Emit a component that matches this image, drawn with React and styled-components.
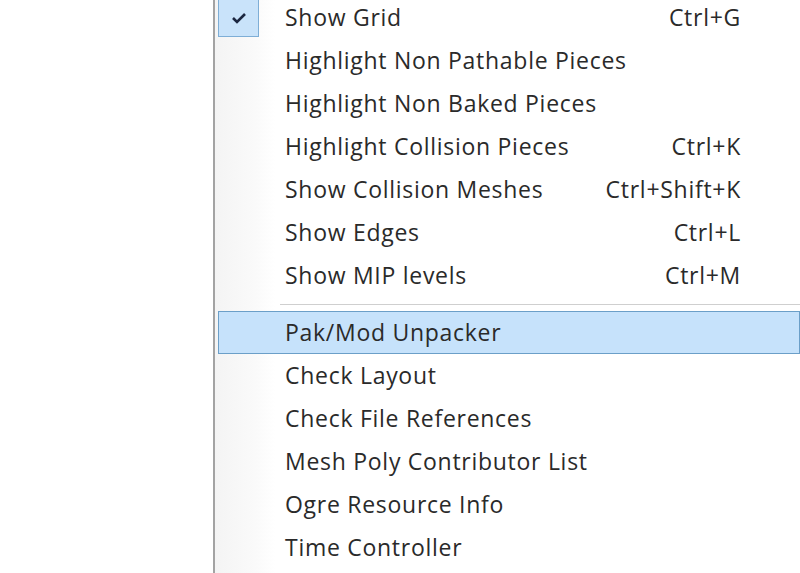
import React from 'react';
import styled, { createGlobalStyle } from 'styled-components';

const GlobalStyle = createGlobalStyle`
  html, body {
    margin: 0;
    padding: 0;
    background: #ffffff;
    overflow: hidden;
  }
`;

const Page = styled.div`
  width: 800px;
  height: 573px;
  display: flex;
  overflow: hidden;
  background: #ffffff;
`;

const Menu = styled.div`
  margin-left: 213px;
  margin-top: -4px;
  width: 600px;
  flex-shrink: 0;
  border-left: 2px solid #a3a3a3;
  background: linear-gradient(to right, #f4f4f4 0px, #fafafa 40px, #ffffff 60px);
  font-family: "Open Sans", "Noto Sans", sans-serif;
  font-size: 23px;
  letter-spacing: 0.72px;
  color: #2a2a2a;
`;

const Item = styled.div`
  height: 43px;
  box-sizing: border-box;
  margin-left: 3px;
  display: grid;
  grid-template-columns: 66px 1fr auto;
  align-items: center;
  padding-right: 58px;
  padding-bottom: 2px;
  background: ${p => (p.$active ? '#c6e2fb' : 'transparent')};
  border: 1px solid ${p => (p.$active ? '#6b9fc8' : 'transparent')};
  width: 582px;
`;

const Gutter = styled.div`
  height: 100%;
  margin-bottom: -2px;
  display: flex;
  align-items: flex-end;
`;

const CheckBox = styled.div`
  width: 41px;
  height: 38px;
  margin-left: -1px;
  box-sizing: border-box;
  background: #c9e3fa;
  border: 1px solid #7eaed6;
  display: flex;
  align-items: center;
  justify-content: center;
`;

const Label = styled.span`
  white-space: nowrap;
`;

const Shortcut = styled.span`
  white-space: nowrap;
  text-align: right;
`;

const Separator = styled.div`
  height: 14px;
  display: flex;
  align-items: center;
  padding-left: 65px;
  &::after {
    content: '';
    flex: 1;
    height: 1px;
    background: #cfcfcf;
    box-shadow: 0 1px 0 #ffffff;
  }
`;

const Check = () => (
  <svg width="16" height="14" viewBox="0 0 16 14">
    <polyline points="2,7 6,11 14,3" fill="none" stroke="#1c2740" strokeWidth="2.6" />
  </svg>
);

const top = [
  { label: 'Show Grid', key: 'Ctrl+G', checked: true },
  { label: 'Highlight Non Pathable Pieces' },
  { label: 'Highlight Non Baked Pieces' },
  { label: 'Highlight Collision Pieces', key: 'Ctrl+K' },
  { label: 'Show Collision Meshes', key: 'Ctrl+Shift+K' },
  { label: 'Show Edges', key: 'Ctrl+L' },
  { label: 'Show MIP levels', key: 'Ctrl+M' },
];

const bottom = [
  { label: 'Pak/Mod Unpacker', active: true },
  { label: 'Check Layout' },
  { label: 'Check File References' },
  { label: 'Mesh Poly Contributor List' },
  { label: 'Ogre Resource Info' },
  { label: 'Time Controller' },
];

const Row = ({ item }) => (
  <Item $active={item.active}>
    <Gutter>
      {item.checked && (
        <CheckBox>
          <Check />
        </CheckBox>
      )}
    </Gutter>
    <Label>{item.label}</Label>
    <Shortcut>{item.key}</Shortcut>
  </Item>
);

export default function App() {
  return (
    <Page>
      <GlobalStyle />
      <Menu>
        {top.map(item => <Row key={item.label} item={item} />)}
        <Separator />
        {bottom.map(item => <Row key={item.label} item={item} />)}
      </Menu>
    </Page>
  );
}
